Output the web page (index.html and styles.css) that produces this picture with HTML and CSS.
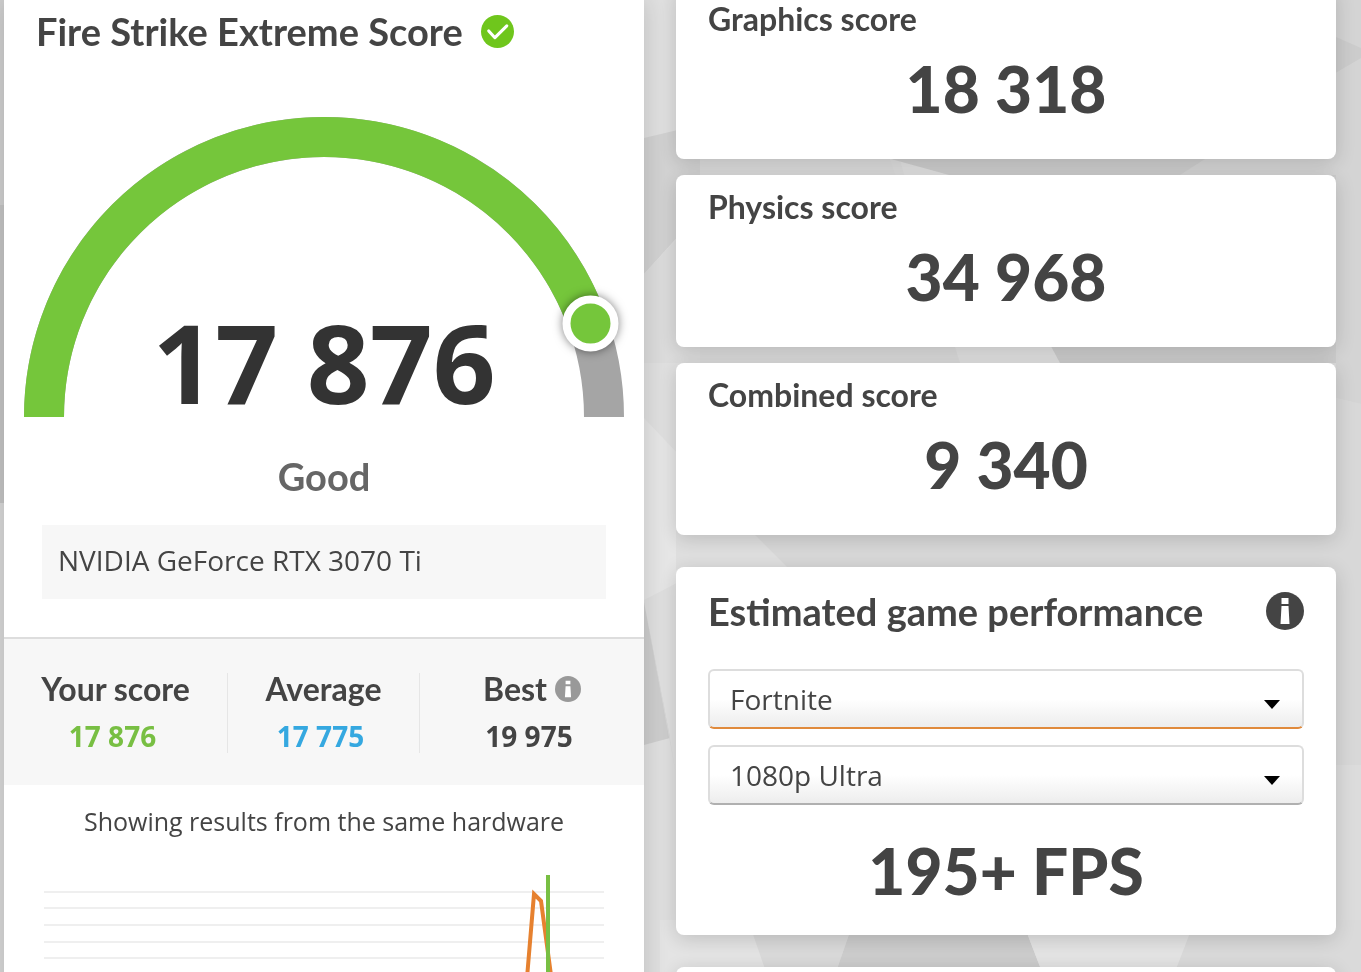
FILE: index.html
```html
<!DOCTYPE html>
<html lang="en">

<head>
    <meta charset="UTF-8">
    <meta name="viewport" content="width=device-width, initial-scale=1.0">
    <title>Fire Strike Extreme Score</title>
    <link rel="stylesheet" href="styles.css">
</head>

<body>
    <!-- background facets -->
    <svg class="facets" viewBox="0 0 1361 972" preserveAspectRatio="none" aria-hidden="true">
        <rect width="1361" height="972" fill="#e0e0e0" />
        <path fill="#cfcfcf" d="M0 0h30v205H0z" />
        <path fill="#c4c4c4" d="M0 205h30v298H0z" />
        <path fill="#d8d8d8" d="M0 503h30v469H0z" />
        <path fill="#d2d2d2" d="M644 138 720 120V190L644 274z" />
        <path fill="#dcdcdc" d="M644 274 750 160H900L960 363H644z" />
        <path fill="#e6e6e6" d="M644 418 760 540 644 600z" />
        <path fill="#cecece" d="M644 602 670 738 644 745z" />
        <path fill="#dadada" d="M644 602 676 775 670 738z" />
        <path fill="#dadada" d="M700 363H1361V570H790L700 480z" />
        <path fill="#dadada" d="M700 159H890L960 363H700z" />
        <path fill="#cccccc" d="M880 156 960 178 1060 363H1361V0H880z" />
        <path fill="#d4d4d4" d="M1205 159 1180 175H1336V0H1205z" />
        <path fill="#d4d4d4" d="M1336 0H1361V404L1336 398z" />
        <path fill="#cccccc" d="M1320 30 1361 48V58L1320 82z" />
        <path fill="#d8d8d8" d="M700 535H1336V398L1361 404V765H700z" />
        <path fill="#dfdfdf" d="M676 530H750L790 570H676z" />
        <path fill="#dcdcdc" d="M1300 765H1361V972H1300z" />
        <path fill="#e4e4e4" d="M660 920H752L766 972H660z" />
        <path fill="#dadada" d="M748 920H854L836 972H766z" />
        <path fill="#cdcdcd" d="M854 920H1022L1042 972H836z" />
        <path fill="#e4e4e4" d="M1022 920H1195L1175 972H1042z" />
        <path fill="#dadada" d="M1195 920H1361V972H1175z" />
    </svg>

    <main class="page">
        <section class="result">
            <header class="result-head">
                <h1>Fire Strike Extreme Score</h1>
                <svg class="check" viewBox="0 0 32 32" role="img" aria-label="Valid result">
                    <circle cx="16" cy="16" r="16" fill="#6fc61c" />
                    <path d="M7.500 15.500 13.500 22 25 10.500" fill="none" stroke="#fff" stroke-width="3" stroke-linecap="round" stroke-linejoin="round" />
                </svg>
            </header>

            <div class="gauge">
                <svg class="gauge-arc" viewBox="0 0 600 300" aria-hidden="true">
                    <path d="M20 300A280 280 0 0 1 580 300" fill="none" stroke="#a5a5a5" stroke-width="40" />
                    <path d="M20 300A280 280 0 0 1 564.100 207" fill="none" stroke="#75c63b" stroke-width="40" />
                    <circle class="knob" cx="566.500" cy="206.500" r="24" fill="#75c63b" stroke="#fff" stroke-width="8" />
                </svg>
                <strong class="gauge-value">17 876</strong>
            </div>
            <p class="rating">Good</p>
            <p class="gpu">NVIDIA GeForce RTX 3070 Ti</p>

            <dl class="stats">
                <div class="stat">
                    <dt>Your score</dt>
                    <dd class="green">17 876</dd>
                </div>
                <div class="stat">
                    <dt>Average</dt>
                    <dd class="blue">17 775</dd>
                </div>
                <div class="stat">
                    <dt>Best
                        <button class="info info-small" type="button" aria-label="About best score">
                            <svg viewBox="0 0 38 38"><circle cx="19" cy="19" r="19" /><path d="M15.500 7h7v5h-7zM15.500 15h7l1 16h-9z" fill="#fff" /></svg>
                        </button>
                    </dt>
                    <dd>19 975</dd>
                </div>
            </dl>

            <p class="note">Showing results from the same hardware</p>
            <svg class="chart" viewBox="0 0 560 200" role="img" aria-label="Score distribution">
                <path d="M0 17H560M0 33H560M0 50H560M0 67H560M0 83H560M0 100H560M0 117H560" stroke="#efefef" stroke-width="2" />
                <path d="M482 115 490 19 497 26 509 115" fill="none" stroke="#e6812f" stroke-width="4" />
                <path d="M504 0V200" stroke="#78bf43" stroke-width="4" />
            </svg>
        </section>

        <div class="side">
            <section class="card">
                <h2>Graphics score</h2>
                <p class="value">18 318</p>
            </section>
            <section class="card">
                <h2>Physics score</h2>
                <p class="value">34 968</p>
            </section>
            <section class="card">
                <h2>Combined score</h2>
                <p class="value">9 340</p>
            </section>
            <section class="card games">
                <header class="games-head">
                    <h1>Estimated game performance</h1>
                    <button class="info" type="button" aria-label="About estimated performance">
                        <svg viewBox="0 0 38 38"><circle cx="19" cy="19" r="19" /><path d="M15.500 6h7v6h-7zM15.500 14h7l1 18h-9z" fill="#fff" /></svg>
                    </button>
                </header>
                <div class="field">
                    <select class="active" aria-label="Game">
                        <option>Fortnite</option>
                    </select>
                </div>
                <div class="field">
                    <select aria-label="Resolution and quality">
                        <option>1080p Ultra</option>
                    </select>
                </div>
                <p class="value">195+ FPS</p>
            </section>
            <section class="card next"></section>
        </div>
    </main>
</body>

</html>
```
FILE: styles.css
```css
* {
    box-sizing: border-box;
}

body,
h1,
h2,
p,
dl,
dd {
    margin: 0;
}

body {
    color: #444;
    font-family: "Open Sans", "Noto Sans", sans-serif;
    font-size: 28px;
    line-height: 40px;
    overflow: hidden;
}

h1,
h2,
dt,
.value,
.rating {
    font-family: Lato, sans-serif;
    font-weight: 700;
}

h1,
.rating {
    font-size: 38px;
    line-height: 48px;
}

h2,
dt {
    font-size: 32px;
    line-height: 40px;
}

.facets {
    position: fixed;
    inset: 0;
    z-index: -1;
    width: 100%;
    height: 100%;
}

.page {
    display: grid;
    grid-template-columns: 640fr 660fr;
    gap: 32px;
    height: 100vh;
    padding: 0 25px 0 4px;
    overflow: hidden;
}

.result {
    background: #fff;
    box-shadow: 0 0 24px rgba(0, 0, 0, .16);
}

.result-head {
    display: flex;
    align-items: center;
    gap: 18px;
    padding: 7px 32px 0;
}

.check {
    width: 33px;
    height: 33px;
}

/* number sits on the arc in the same grid cell */
.gauge {
    display: grid;
    margin: 62px 20px 0;
}

.gauge-arc,
.gauge-value {
    grid-area: 1 / 1;
}

.gauge-arc {
    display: block;
    width: 100%;
    overflow: visible;
}

.knob {
    filter: drop-shadow(0 0 5px rgba(0, 0, 0, .5));
}

.gauge-value {
    align-self: end;
    color: #333;
    font-size: 110px;
    line-height: 112px;
    text-align: center;
}

.rating {
    margin-top: 35px;
    color: #666;
    text-align: center;
}

.gpu {
    margin: 25px 38px 38px;
    padding: 14px 16px 18px;
    background: #f7f7f7;
    line-height: 42px;
}

.stats {
    display: grid;
    grid-template-columns: 223fr 192fr 225fr;
    padding: 34px 0 32px;
    border-top: 2px solid #ddd;
    background: #f7f7f7;
    text-align: center;
}

.stat + .stat {
    border-left: 1px solid #e6e6e6;
}

.stat dt {
    display: flex;
    align-items: center;
    justify-content: center;
    gap: 8px;
    height: 32px;
}

.stat dd {
    padding: 14px 6px 0 0;
    font-weight: 700;
    line-height: 34px;
}

.green {
    color: #78bf43;
}

.blue {
    color: #35a8e0;
}

.info {
    width: 38px;
    height: 38px;
    padding: 0;
    border: 0;
    background: none;
    color: #444;
}

.info svg {
    display: block;
    width: 100%;
    fill: currentColor;
}

.info-small {
    width: 26px;
    height: 26px;
    color: #999;
}

.note {
    padding-top: 16px;
    font-size: 25px;
    text-align: center;
}

.chart {
    display: block;
    margin: 34px 40px 0;
}

.side {
    margin-top: -13px;
}

.card {
    margin-bottom: 16px;
    padding: 12px 32px 30px;
    border-radius: 8px;
    background: #fff;
    box-shadow: 0 4px 20px rgba(0, 0, 0, .16);
}

.value {
    margin-top: 10px;
    font-size: 64px;
    font-weight: 900;
    line-height: 80px;
    text-align: center;
}

.games {
    margin: 32px 0;
    padding: 20px 32px 24px;
}

.games-head {
    display: flex;
    align-items: center;
    justify-content: space-between;
    margin-bottom: 34px;
}

.field {
    display: grid;
    align-items: center;
    margin-bottom: 16px;
}

/* caret */
.field::after {
    content: "";
    grid-area: 1 / 1;
    justify-self: end;
    margin: 10px 24px 0 0;
    border: 8px solid transparent;
    border-top: 9px solid #000;
    border-bottom: 0;
    pointer-events: none;
}

.field select {
    grid-area: 1 / 1;
    width: 100%;
    height: 60px;
    padding: 0 20px;
    border: 2px solid #ddd;
    border-bottom-color: #b0b0b0;
    border-radius: 6px;
    background: linear-gradient(#fff 50%, #ededed);
    color: #444;
    font: 28px "Open Sans", "Noto Sans", sans-serif;
    appearance: none;
}

.field select.active {
    border-bottom-color: #e08a3c;
}

.games .value {
    margin-top: 26px;
}

.next {
    height: 172px;
}
```
